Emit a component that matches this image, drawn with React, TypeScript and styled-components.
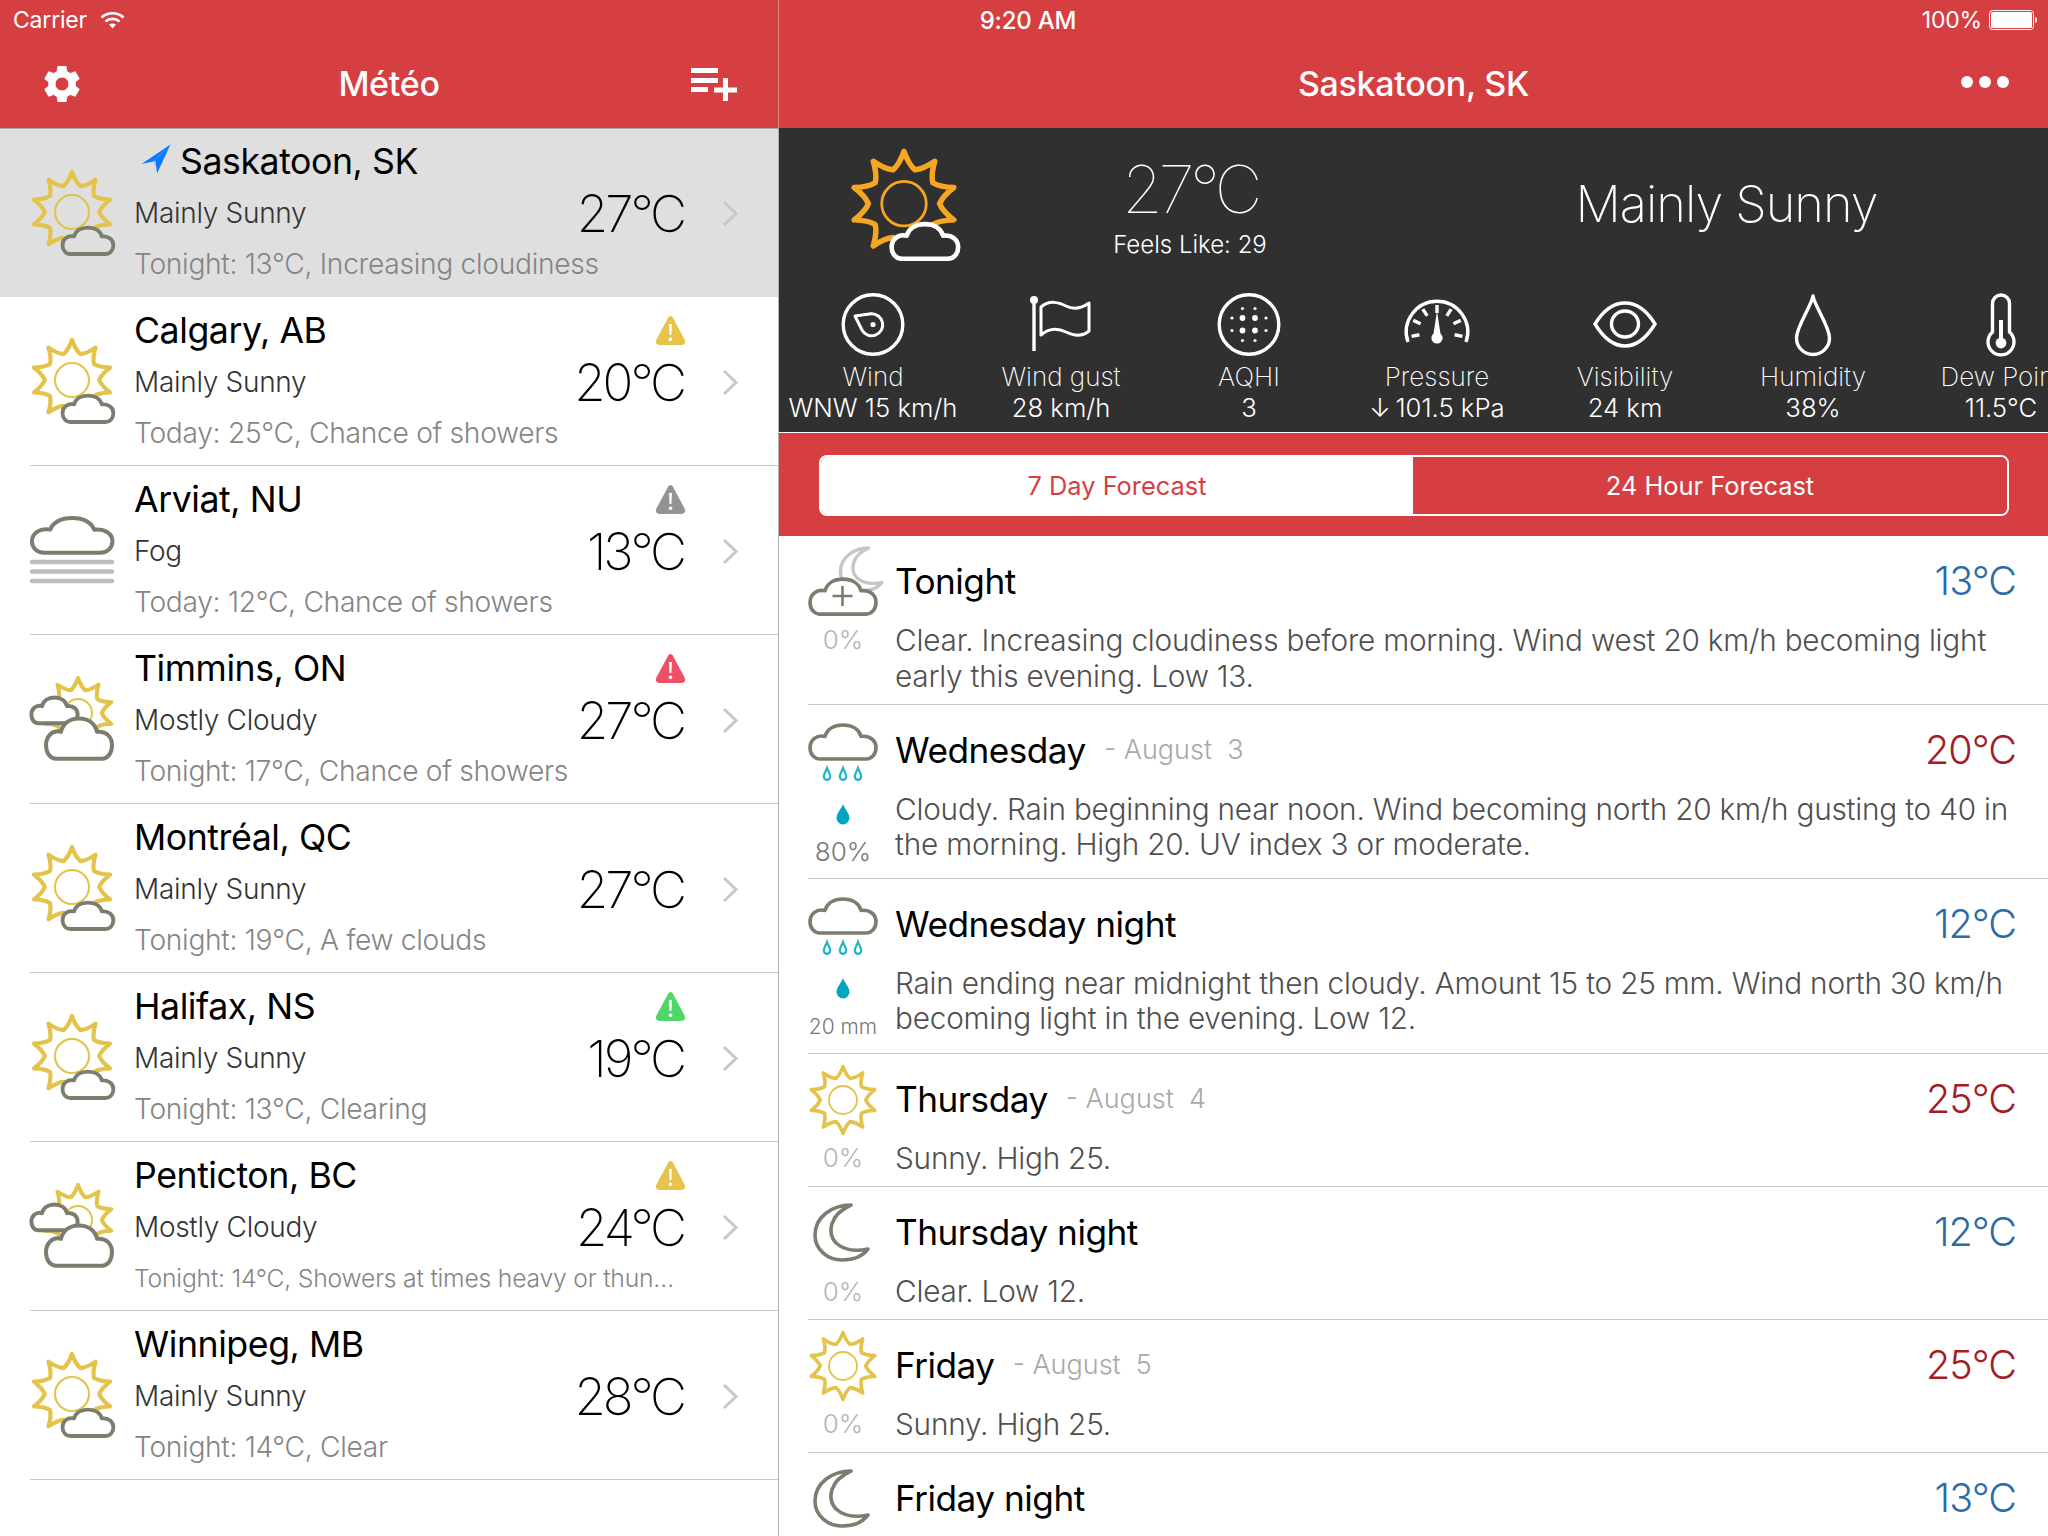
import React from 'react';
import styled, { createGlobalStyle } from 'styled-components';

const RED = '#d53f42';
const DARK = '#303030';
const SUN_YELLOW = '#e3c34a';
const CLOUD_GREY = '#7b7d6e';
const FONT = 'Inter, "Liberation Sans", sans-serif';

const Global = createGlobalStyle`
  html, body { margin: 0; padding: 0; background: #fff; width: 2048px; height: 1536px; overflow: hidden; }
  body { font-family: ${FONT}; }
  * { box-sizing: border-box; }
  svg { overflow: visible; flex: none; }
`;

const Page = styled.div`
  position: relative;
  width: 2048px;
  height: 1536px;
  display: grid;
  grid-template-columns: 779px 1fr;
  overflow: hidden;
  background: #fff;
`;

const StatusBar = styled.div`
  position: absolute;
  top: 0;
  left: 0;
  right: 0;
  height: 40px;
  padding: 0 11px 0 13px;
  display: grid;
  grid-template-columns: 1fr auto 1fr;
  align-items: center;
  color: #fff;
  font-size: 23px;
  letter-spacing: -0.2px;
`;
const StatusLeft = styled.div`
  display: flex;
  align-items: center;
  gap: 13px;
`;
const StatusTime = styled.div`
  font-weight: 500;
  font-size: 24px;
  margin-left: 6px;
`;
const StatusRight = styled.div`
  display: flex;
  align-items: center;
  justify-content: flex-end;
  gap: 7px;
`;

const LeftPane = styled.div`
  display: flex;
  flex-direction: column;
  min-width: 0;
`;
const RightPane = styled.div`
  display: flex;
  flex-direction: column;
  min-width: 0;
  overflow: hidden;
`;

const NavBar = styled.header<{ $divider?: boolean }>`
  flex: none;
  height: ${p => (p.$divider ? 129 : 128)}px;
  padding-top: 40px;
  background: ${RED};
  display: grid;
  grid-template-columns: 1fr auto 1fr;
  align-items: center;
  color: #fff;
  ${p => p.$divider && `
    border-right: 1px solid rgba(255,255,255,.35);
    border-bottom: 1px solid #a8a8a8;
  `}
`;
const NavTitle = styled.h1`
  margin: 0;
  font-size: 34px;
  font-weight: 500;
  letter-spacing: -0.3px;
  line-height: 44px;
`;
const NavStart = styled.div`
  padding-left: 44px;
  display: flex;
`;
const NavEnd = styled.div<{ $pad: number }>`
  padding-right: ${p => p.$pad}px;
  display: flex;
  justify-content: flex-end;
`;
const Dots = styled.div`
  display: flex;
  gap: 6px;
  margin-bottom: 4px;
`;
const Dot = styled.span`
  width: 12px;
  height: 12px;
  border-radius: 50%;
  background: #fff;
`;

const CityList = styled.div`
  flex: 1;
  border-right: 1px solid #b2b2b2;
`;
const CityRow = styled.div<{ $selected?: boolean }>`
  background: ${p => (p.$selected ? '#dfdfdf' : '#fff')};
  padding-left: 30px;
`;
const CityInner = styled.div<{ $selected?: boolean }>`
  display: grid;
  grid-template-columns: 84px 1fr;
  column-gap: 20px;
  align-items: center;
  height: ${p => (p.$selected ? 168 : 169)}px;
  padding-right: 40px;
  ${p => !p.$selected && 'border-bottom: 1px solid #c8c8c8;'}
`;
const CityText = styled.div<{ $selected?: boolean }>`
  display: flex;
  flex-direction: column;
  height: 100%;
  padding-top: ${p => (p.$selected ? 9 : 10)}px;
  min-width: 0;
`;
const CityTop = styled.div`
  display: flex;
  align-items: center;
  justify-content: space-between;
  height: 46px;
  padding-right: 52px;
`;
const CityName = styled.div`
  display: flex;
  align-items: center;
  font-size: 35.7px;
  color: #000;
  letter-spacing: -0.45px;
`;
const LocationWrap = styled.span`
  display: flex;
  margin: -4px 9px 0 7px;
`;
const CityMid = styled.div`
  display: flex;
  align-items: center;
  height: 52px;
  margin-top: 3px;
`;
const Condition = styled.div`
  flex: 1;
  font-size: 28px;
  font-weight: 300;
  color: #333;
  letter-spacing: -0.3px;
`;
const CityTemp = styled.div`
  font-size: 51px;
  font-weight: 150;
  color: #000;
  letter-spacing: -3px;
  margin-right: 38px;
`;
const CitySub = styled.div<{ $small?: boolean }>`
  margin-top: 5px;
  line-height: 40px;
  font-size: ${p => (p.$small ? 24.7 : 28.2)}px;
  font-weight: 300;
  color: #858585;
  letter-spacing: ${p => (p.$small ? -0.2 : -0.3)}px;
  white-space: nowrap;
`;

const DarkPanel = styled.section`
  flex: none;
  background: ${DARK};
  color: #fff;
  border-bottom: 1px solid #fff;
  height: 305px;
  overflow: hidden;
`;
const Hero = styled.div`
  height: 154px;
  display: grid;
  grid-template-columns: 250px 322px 1fr;
  align-items: center;
  justify-items: center;
`;
const HeroTempCol = styled.div`
  display: flex;
  flex-direction: column;
  align-items: center;
`;
const HeroTemp = styled.div`
  margin-top: 3px;
  font-size: 66px;
  font-weight: 100;
  line-height: 72px;
  letter-spacing: -4.5px;
`;
const FeelsLike = styled.div`
  font-size: 24px;
  font-weight: 300;
  line-height: 30px;
  margin-top: 5px;
`;
const HeroCondition = styled.div`
  font-size: 50.5px;
  font-weight: 200;
  letter-spacing: -1px;
  padding-left: 54px;
  margin-bottom: 3px;
  white-space: nowrap;
`;
const Metrics = styled.div`
  display: flex;
  padding-top: 11px;
`;
const Metric = styled.div`
  flex: 0 0 188px;
  display: flex;
  flex-direction: column;
  align-items: center;
  white-space: nowrap;
`;
const MetricLabel = styled.div`
  margin-top: 5px;
  font-size: 26px;
  font-weight: 200;
  line-height: 32px;
`;
const MetricValue = styled.div`
  font-size: 25.7px;
  font-weight: 300;
  line-height: 30px;
`;

const SegmentBar = styled.div`
  flex: none;
  background: ${RED};
  height: 103px;
  padding: 22px 39px 20px 40px;
`;
const Segment = styled.div`
  display: grid;
  grid-template-columns: 592px 1fr;
  height: 61px;
  border: 2px solid #fff;
  border-radius: 8px;
  overflow: hidden;
`;
const SegmentItem = styled.div<{ $active?: boolean }>`
  display: flex;
  align-items: center;
  justify-content: center;
  font-size: 25.4px;
  background: ${p => (p.$active ? '#fff' : RED)};
  color: ${p => (p.$active ? RED : '#fff')};
`;

const Forecast = styled.div`
  flex: none;
  padding-left: 29px;
`;
const ForecastRow = styled.article`
  display: grid;
  grid-template-columns: 70px 1fr;
  column-gap: 17px;
  border-bottom: 1px solid #c8c8c8;
`;
const IconCol = styled.div<{ $top: number }>`
  display: flex;
  flex-direction: column;
  align-items: center;
  padding-top: ${p => p.$top}px;
  padding-bottom: 11px;
`;
const BigDrop = styled.span`
  display: flex;
  margin-top: 23px;
`;
const Chance = styled.div<{ $tone: 'light' | 'dark' | 'mm'; $gap: number }>`
  margin-top: ${p => p.$gap}px;
  line-height: ${p => (p.$tone === 'mm' ? 31 : 30)}px;
  font-size: ${p => (p.$tone === 'mm' ? 21 : 26)}px;
  font-weight: 300;
  white-space: nowrap;
  color: ${p => (p.$tone === 'light' ? '#b5b5b5' : '#777')};
`;
const TextCol = styled.div`
  padding: 23px 32px 9.5px 0;
  min-width: 0;
`;
const TitleRow = styled.div`
  display: flex;
  align-items: center;
  height: 44px;
`;
const DayTitle = styled.div`
  font-size: 35.2px;
  color: #000;
  letter-spacing: -0.5px;
`;
const DayDate = styled.div`
  margin-left: 18px;
  font-size: 27px;
  font-weight: 300;
  color: #a9a9a9;
  white-space: pre;
  flex: 1;
`;
const DayTemp = styled.div<{ $hot?: boolean }>`
  margin-left: auto;
  font-size: 39.5px;
  font-weight: 300;
  letter-spacing: -1px;
  color: ${p => (p.$hot ? '#a31c26' : '#2c6ca6')};
`;
const Description = styled.p`
  margin: 20px 0 0;
  font-size: 29.75px;
  line-height: 35.5px;
  color: #4f4f4f;
  font-weight: 300;
  letter-spacing: -0.21px;
`;

/* ---------- drawings ---------- */

function starPath(R: number, inner: number) {
  const n = 10;
  const pt = (deg: number, r: number) => {
    const a = ((deg - 90) * Math.PI) / 180;
    return `${(r * Math.cos(a)).toFixed(2)} ${(r * Math.sin(a)).toFixed(2)}`;
  };
  let d = `M${pt(0, R)}`;
  for (let i = 0; i < n; i++) {
    const a = i * (360 / n);
    const v = a + 18;
    d += ` Q${pt(a + 7, inner + (R - inner) * 0.22)} ${pt(v, inner)}`;
    d += ` Q${pt(v + 11, inner + (R - inner) * 0.22)} ${pt(a + 36, R)}`;
  }
  return d + 'Z';
}

const SunShape = ({ x, y, R, r, color, sw = 4 }: { x: number; y: number; R: number; r: number; color: string; sw?: number }) => (
  <g transform={`translate(${x} ${y})`}>
    <path d={starPath(R, R * 0.68)} fill="none" stroke={color} strokeWidth={sw} strokeLinejoin="round" />
    <circle r={r} fill="none" stroke={color} strokeWidth={sw * 0.5} />
  </g>
);

const CLOUD = 'M12 35H58C64 35 68 30 68 24C68 17 62 12 53 13C51 6 44 2 35 2C26 2 19 6 17 13C8 11 2 17 2 24C2 30 6 35 12 35Z';

const Cloud = ({ tx, ty, sx, sy, stroke = CLOUD_GREY, fill = 'none', sw = 3.6 }: { tx: number; ty: number; sx: number; sy: number; stroke?: string; fill?: string; sw?: number }) => (
  <g transform={`translate(${tx} ${ty}) scale(${sx} ${sy})`}>
    <path d={CLOUD} fill={fill} stroke={stroke} strokeWidth={sw} vectorEffect="non-scaling-stroke" strokeLinejoin="round" />
  </g>
);

const MOON = 'M43 2C24 2 7 14 7 32C7 47 20 57 34 57C46 57 55 53 60 46C46 49 36 47 28 40C19 30 21 12 43 2Z';

type IconKind = 'sunny' | 'cloudy' | 'fog';

const PartlySunny = ({ size, sun, cloud, bg, sw }: { size: number; sun: string; cloud: string; bg: string; sw?: number }) => (
  <svg width={size} height={size} viewBox="0 0 84 84">
    <SunShape x={42} y={41} R={40} r={17} color={sun} sw={4.2} />
    <Cloud tx={31} ty={55} sx={0.77} sy={0.8} stroke={cloud} fill={bg} sw={sw ?? 3.8} />
  </svg>
);

const FogIcon = () => (
  <svg width={84} height={84} viewBox="0 0 84 84">
    <Cloud tx={-0.5} ty={8} sx={1.22} sy={1.05} sw={4} />
    {[54, 63.5, 73].map(y => (
      <line key={y} x1={2} x2={82} y1={y} y2={y} stroke="#bdbcb8" strokeWidth={4.5} strokeLinecap="round" />
    ))}
  </svg>
);

const MostlyCloudy = () => (
  <svg width={84} height={84} viewBox="0 0 84 84">
    <SunShape x={48} y={36} R={35} r={14} color={SUN_YELLOW} sw={4} />
    <Cloud tx={0} ty={19} sx={0.7} sy={0.78} fill="#fff" sw={4} />
    <Cloud tx={14} ty={39} sx={1} sy={1.22} fill="#fff" sw={4} />
  </svg>
);

const CityIcon = ({ kind, bg }: { kind: IconKind; bg: string }) => {
  if (kind === 'fog') return <FogIcon />;
  if (kind === 'cloudy') return <MostlyCloudy />;
  return <PartlySunny size={84} sun={SUN_YELLOW} cloud={CLOUD_GREY} bg={bg} />;
};

const Gear = () => {
  const pts: string[] = [];
  const R = 18;
  const root = 13.4;
  const pol = (deg: number, r: number) => {
    const a = ((deg - 90) * Math.PI) / 180;
    return `${(20 + r * Math.cos(a)).toFixed(2)} ${(20 + r * Math.sin(a)).toFixed(2)}`;
  };
  for (let i = 0; i < 6; i++) {
    const a = i * 60;
    pts.push(pol(a - 21, root), pol(a - 13, R), pol(a + 13, R), pol(a + 21, root));
  }
  const d = `M${pts.join('L')}Z M27 20A7 7 0 1 0 13 20A7 7 0 1 0 27 20Z`;
  return (
    <svg width={40} height={40} viewBox="0 0 40 40" style={{ marginLeft: -2 }}>
      <path d={d} fill="#fff" fillRule="evenodd" stroke="#fff" strokeWidth={1} strokeLinejoin="round" />
    </svg>
  );
};

const ListPlus = () => (
  <svg width={46} height={33} viewBox="0 0 46 33">
    <rect x={0} y={0} width={27} height={5} fill="#fff" />
    <rect x={0} y={10} width={27} height={5} fill="#fff" />
    <rect x={0} y={19} width={17} height={5} fill="#fff" />
    <rect x={23} y={19.5} width={23} height={5} fill="#fff" />
    <rect x={32} y={10} width={5} height={23} fill="#fff" />
  </svg>
);

const Wifi = () => (
  <svg width={25} height={18} viewBox="0 0 25 18">
    <path d="M1.5 6.5C7.5 .8 17.5 .8 23.5 6.5" fill="none" stroke="#fff" strokeWidth={2.6} />
    <path d="M5.5 10.5C9.5 7 15.5 7 19.5 10.5" fill="none" stroke="#fff" strokeWidth={2.6} />
    <path d="M9 13.5C11 12 14 12 16 13.5L12.5 17.5Z" fill="#fff" />
  </svg>
);

const Battery = () => (
  <svg width={48} height={20} viewBox="0 0 48 20">
    <rect x={0.5} y={0.5} width={44} height={19} rx={3} fill="none" stroke="#fff" />
    <rect x={2} y={2} width={41} height={16} rx={1.5} fill="#fff" />
    <path d="M46 7C47.5 7.3 48 8.5 48 10C48 11.5 47.5 12.7 46 13Z" fill="#fff" />
  </svg>
);

const LocationArrow = () => (
  <svg width={30} height={30} viewBox="0 0 30 30">
    <path d="M29.5 .5L.5 20L14.5 17L16 29.5Z" fill="#0a7aff" />
    <path d="M25.5 5L12.5 16.5L15.5 23" fill="none" stroke="#5aa6f5" strokeWidth={0.6} />
  </svg>
);

const AlertIcon = ({ color }: { color: string }) => (
  <svg width={31} height={30} viewBox="0 0 31 30">
    <path d="M15.5 1C16.8 1 17.6 2 18.2 3.2L29.6 24.5C31 27.2 29.6 30 26.6 30H4.4C1.4 30 0 27.2 1.4 24.5L12.8 3.2C13.4 2 14.2 1 15.5 1Z" fill={color} />
    <path d="M14 9H17L16.4 20H14.6Z" fill="#fff" />
    <circle cx={15.5} cy={24.2} r={1.8} fill="#fff" />
  </svg>
);

const Chevron = () => (
  <svg width={16} height={27} viewBox="0 0 16 27">
    <path d="M2 2L14 13.5L2 25" fill="none" stroke="#c7c7cc" strokeWidth={3} />
  </svg>
);

const Met = { fill: 'none', stroke: '#fff', strokeWidth: 3.4 };
const MetricSvg = ({ children }: { children: React.ReactNode }) => (
  <svg width={64} height={63} viewBox="0 0 64 63">{children}</svg>
);

const WindIcon = () => (
  <MetricSvg>
    <circle cx={32} cy={31.5} r={29.8} {...Met} />
    <path d="M14 23L30 20.8A11 11 0 1 1 21 37Z" {...Met} strokeWidth={3} strokeLinejoin="round" />
    <circle cx={32} cy={31.5} r={2.6} fill="#fff" />
  </MetricSvg>
);
const FlagIcon = () => (
  <MetricSvg>
    <line x1={5} x2={5} y1={8} y2={58} {...Met} />
    <circle cx={5} cy={7} r={4} fill="#fff" />
    <path d="M12 14C20 7 30 9 37 13C45 17 53 15 60 10V38C53 44 45 43 37 39C29 35 20 35 12 42Z" {...Met} strokeWidth={3} strokeLinejoin="round" />
  </MetricSvg>
);
const AqhiIcon = () => {
  const xs = [-17, -6.5, 6, 17];
  const ys = [-16, -6.5, 6, 16];
  return (
    <MetricSvg>
      <circle cx={32} cy={31.5} r={29.8} {...Met} />
      {ys.map((y, j) =>
        xs.map((x, i) => {
          const outerY = j === 0 || j === 3;
          const outerX = i === 0 || i === 3;
          if (outerY && outerX) return null;
          return <circle key={`${i}-${j}`} cx={32 + x} cy={31.5 + y} r={outerY || outerX ? 1.6 : 2.9} fill="#fff" />;
        })
      )}
    </MetricSvg>
  );
};
const PressureIcon = () => (
  <MetricSvg>
    <path d="M3 49A30.7 30.7 0 1 1 61 49" {...Met} />
    {[-102, -66, -33, 0, 33, 66, 102].map(a => (
      <line key={a} x1={32} x2={32} y1={12} y2={20} stroke="#fff" strokeWidth={3.4} transform={`rotate(${a} 32 38)`} />
    ))}
    <path d="M32 18L28 44H36Z" fill="#fff" />
    <circle cx={32} cy={45} r={5.6} fill="#fff" />
  </MetricSvg>
);
const EyeIcon = () => (
  <MetricSvg>
    <path d="M2 31C10 18 20 10 32 10C44 10 54 18 62 31C54 44 44 53 32 53C20 53 10 44 2 31Z" {...Met} />
    <ellipse cx={32} cy={31} rx={13.5} ry={13} {...Met} />
  </MetricSvg>
);
const DropIcon = () => (
  <MetricSvg>
    <path d="M32 3C30 14 15.5 33 15.5 45A16.5 16.5 0 0 0 48.5 45C48.5 33 34 14 32 3Z" {...Met} strokeLinejoin="round" />
  </MetricSvg>
);
const ThermoIcon = () => (
  <MetricSvg>
    <path d="M23.5 39V10.5A8.5 8.5 0 0 1 40.5 10.5V39A13 13 0 1 1 23.5 39Z" {...Met} />
    <line x1={32} x2={32} y1={27} y2={48} stroke="#fff" strokeWidth={4} />
    <circle cx={32} cy={50} r={5.4} fill="#fff" />
  </MetricSvg>
);

const RainIcon = () => (
  <svg width={70} height={58} viewBox="0 0 70 58">
    <Cloud tx={0} ty={0} sx={1} sy={1.03} />
    {[19, 35, 50].map(x => (
      <path key={x} transform={`translate(${x} 44)`} d="M0 1C-1 4 -3.2 7 -3.2 9.6A3.2 3.2 0 0 0 3.2 9.6C3.2 7 1 4 0 1Z" fill="none" stroke="#22b4cc" strokeWidth={2.2} />
    ))}
  </svg>
);
const SolidDrop = () => (
  <svg width={14} height={21} viewBox="0 0 14 21">
    <path d="M7 0C6 4 .5 9 .5 14A6.5 6.5 0 0 0 13.5 14C13.5 9 8 4 7 0Z" fill="#00a6c0" />
  </svg>
);
const CloudMoonIcon = () => (
  <svg width={70} height={68} viewBox="0 0 70 68">
    <g transform="translate(27 -.5) scale(.78 .78)">
      <path d={MOON} fill="none" stroke="#c6c6c6" strokeWidth={4.4} strokeLinejoin="round" />
    </g>
    <Cloud tx={0} ty={30} sx={1} sy={1.06} fill="#fff" />
    <path d="M24.5 49H44.5M34.5 39V59" stroke={CLOUD_GREY} strokeWidth={2.6} fill="none" />
  </svg>
);
const MoonIcon = () => (
  <svg width={70} height={59} viewBox="0 0 70 59">
    <path d={MOON} fill="none" stroke={CLOUD_GREY} strokeWidth={3.6} strokeLinejoin="round" />
  </svg>
);
const SunIcon = () => (
  <svg width={70} height={70} viewBox="0 0 70 70">
    <SunShape x={35} y={35} R={33.5} r={14} color={SUN_YELLOW} sw={3.6} />
  </svg>
);

/* ---------- data ---------- */

type City = { name: string; cond: string; temp: string; sub: string; kind: IconKind; alert?: string; here?: boolean; small?: boolean };
const cities: City[] = [
  { name: 'Saskatoon, SK', cond: 'Mainly Sunny', temp: '27°C', sub: 'Tonight: 13°C, Increasing cloudiness', kind: 'sunny', here: true },
  { name: 'Calgary, AB', cond: 'Mainly Sunny', temp: '20°C', sub: 'Today: 25°C, Chance of showers', kind: 'sunny', alert: '#e6c44c' },
  { name: 'Arviat, NU', cond: 'Fog', temp: '13°C', sub: 'Today: 12°C, Chance of showers', kind: 'fog', alert: '#939393' },
  { name: 'Timmins, ON', cond: 'Mostly Cloudy', temp: '27°C', sub: 'Tonight: 17°C, Chance of showers', kind: 'cloudy', alert: '#ee5066' },
  { name: 'Montréal, QC', cond: 'Mainly Sunny', temp: '27°C', sub: 'Tonight: 19°C, A few clouds', kind: 'sunny' },
  { name: 'Halifax, NS', cond: 'Mainly Sunny', temp: '19°C', sub: 'Tonight: 13°C, Clearing', kind: 'sunny', alert: '#50d76a' },
  { name: 'Penticton, BC', cond: 'Mostly Cloudy', temp: '24°C', sub: 'Tonight: 14°C, Showers at times heavy or thun…', kind: 'cloudy', alert: '#e6c44c', small: true },
  { name: 'Winnipeg, MB', cond: 'Mainly Sunny', temp: '28°C', sub: 'Tonight: 14°C, Clear', kind: 'sunny' },
];

const metrics = [
  { icon: <WindIcon />, label: 'Wind', value: 'WNW 15 km/h' },
  { icon: <FlagIcon />, label: 'Wind gust', value: '28 km/h' },
  { icon: <AqhiIcon />, label: 'AQHI', value: '3' },
  { icon: <PressureIcon />, label: 'Pressure', value: '↓\u2009101.5 kPa' },
  { icon: <EyeIcon />, label: 'Visibility', value: '24 km' },
  { icon: <DropIcon />, label: 'Humidity', value: '38%' },
  { icon: <ThermoIcon />, label: 'Dew Point', value: '11.5°C' },
];

type Day = {
  title: string; date?: string; temp: string; hot?: boolean; text?: string;
  icon: React.ReactNode; top: number; chance?: string; tone: 'light' | 'dark' | 'mm'; gap: number; drop?: boolean;
};
const days: Day[] = [
  { title: 'Tonight', temp: '13°C', text: 'Clear. Increasing cloudiness before morning. Wind west 20 km/h becoming light early this evening. Low 13.', icon: <CloudMoonIcon />, top: 11, chance: '0%', tone: 'light', gap: 10 },
  { title: 'Wednesday', date: '- August  3', temp: '20°C', hot: true, text: 'Cloudy. Rain beginning near noon. Wind becoming north 20 km/h gusting to 40 in the morning. High 20. UV index 3 or moderate.', icon: <RainIcon />, top: 18, chance: '80%', tone: 'dark', gap: 12, drop: true },
  { title: 'Wednesday night', temp: '12°C', text: 'Rain ending near midnight then cloudy. Amount 15 to 25 mm. Wind north 30 km/h becoming light in the evening. Low 12.', icon: <RainIcon />, top: 18, chance: '20 mm', tone: 'mm', gap: 12, drop: true },
  { title: 'Thursday', date: '- August  4', temp: '25°C', hot: true, text: 'Sunny. High 25.', icon: <SunIcon />, top: 11, chance: '0%', tone: 'light', gap: 8 },
  { title: 'Thursday night', temp: '12°C', text: 'Clear. Low 12.', icon: <MoonIcon />, top: 16, chance: '0%', tone: 'light', gap: 15 },
  { title: 'Friday', date: '- August  5', temp: '25°C', hot: true, text: 'Sunny. High 25.', icon: <SunIcon />, top: 11, chance: '0%', tone: 'light', gap: 8 },
  { title: 'Friday night', temp: '13°C', icon: <MoonIcon />, top: 16, tone: 'light', gap: 15 },
];

export default function App() {
  return (
    <>
      <Global />
      <Page>
        <LeftPane>
          <NavBar $divider>
            <NavStart><Gear /></NavStart>
            <NavTitle>Météo</NavTitle>
            <NavEnd $pad={41}><ListPlus /></NavEnd>
          </NavBar>
          <CityList>
            {cities.map(c => (
              <CityRow key={c.name} $selected={c.here}>
                <CityInner $selected={c.here}>
                  <CityIcon kind={c.kind} bg={c.here ? '#dfdfdf' : '#fff'} />
                  <CityText $selected={c.here}>
                    <CityTop>
                      <CityName>
                        {c.here && <LocationWrap><LocationArrow /></LocationWrap>}
                        {c.name}
                      </CityName>
                      {c.alert && <AlertIcon color={c.alert} />}
                    </CityTop>
                    <CityMid>
                      <Condition>{c.cond}</Condition>
                      <CityTemp>{c.temp}</CityTemp>
                      <Chevron />
                    </CityMid>
                    <CitySub $small={c.small}>{c.sub}</CitySub>
                  </CityText>
                </CityInner>
              </CityRow>
            ))}
          </CityList>
        </LeftPane>

        <RightPane>
          <NavBar>
            <span />
            <NavTitle>Saskatoon, SK</NavTitle>
            <NavEnd $pad={39}>
              <Dots><Dot /><Dot /><Dot /></Dots>
            </NavEnd>
          </NavBar>
          <DarkPanel>
            <Hero>
              <PartlySunny size={110} sun="#f5a623" cloud="#fff" bg={DARK} sw={4.6} />
              <HeroTempCol>
                <HeroTemp>27°C</HeroTemp>
                <FeelsLike>Feels Like: 29</FeelsLike>
              </HeroTempCol>
              <HeroCondition>Mainly Sunny</HeroCondition>
            </Hero>
            <Metrics>
              {metrics.map(m => (
                <Metric key={m.label}>
                  {m.icon}
                  <MetricLabel>{m.label}</MetricLabel>
                  <MetricValue>{m.value}</MetricValue>
                </Metric>
              ))}
            </Metrics>
          </DarkPanel>
          <SegmentBar>
            <Segment>
              <SegmentItem $active>7 Day Forecast</SegmentItem>
              <SegmentItem>24 Hour Forecast</SegmentItem>
            </Segment>
          </SegmentBar>
          <Forecast>
            {days.map(d => (
              <ForecastRow key={d.title}>
                <IconCol $top={d.top}>
                  {d.icon}
                  {d.drop && <BigDrop><SolidDrop /></BigDrop>}
                  {d.chance && <Chance $tone={d.tone} $gap={d.gap}>{d.chance}</Chance>}
                </IconCol>
                <TextCol>
                  <TitleRow>
                    <DayTitle>{d.title}</DayTitle>
                    {d.date && <DayDate>{d.date}</DayDate>}
                    <DayTemp $hot={d.hot}>{d.temp}</DayTemp>
                  </TitleRow>
                  {d.text && <Description>{d.text}</Description>}
                </TextCol>
              </ForecastRow>
            ))}
          </Forecast>
        </RightPane>

        <StatusBar>
          <StatusLeft>Carrier <Wifi /></StatusLeft>
          <StatusTime>9:20 AM</StatusTime>
          <StatusRight>100% <Battery /></StatusRight>
        </StatusBar>
      </Page>
    </>
  );
}
